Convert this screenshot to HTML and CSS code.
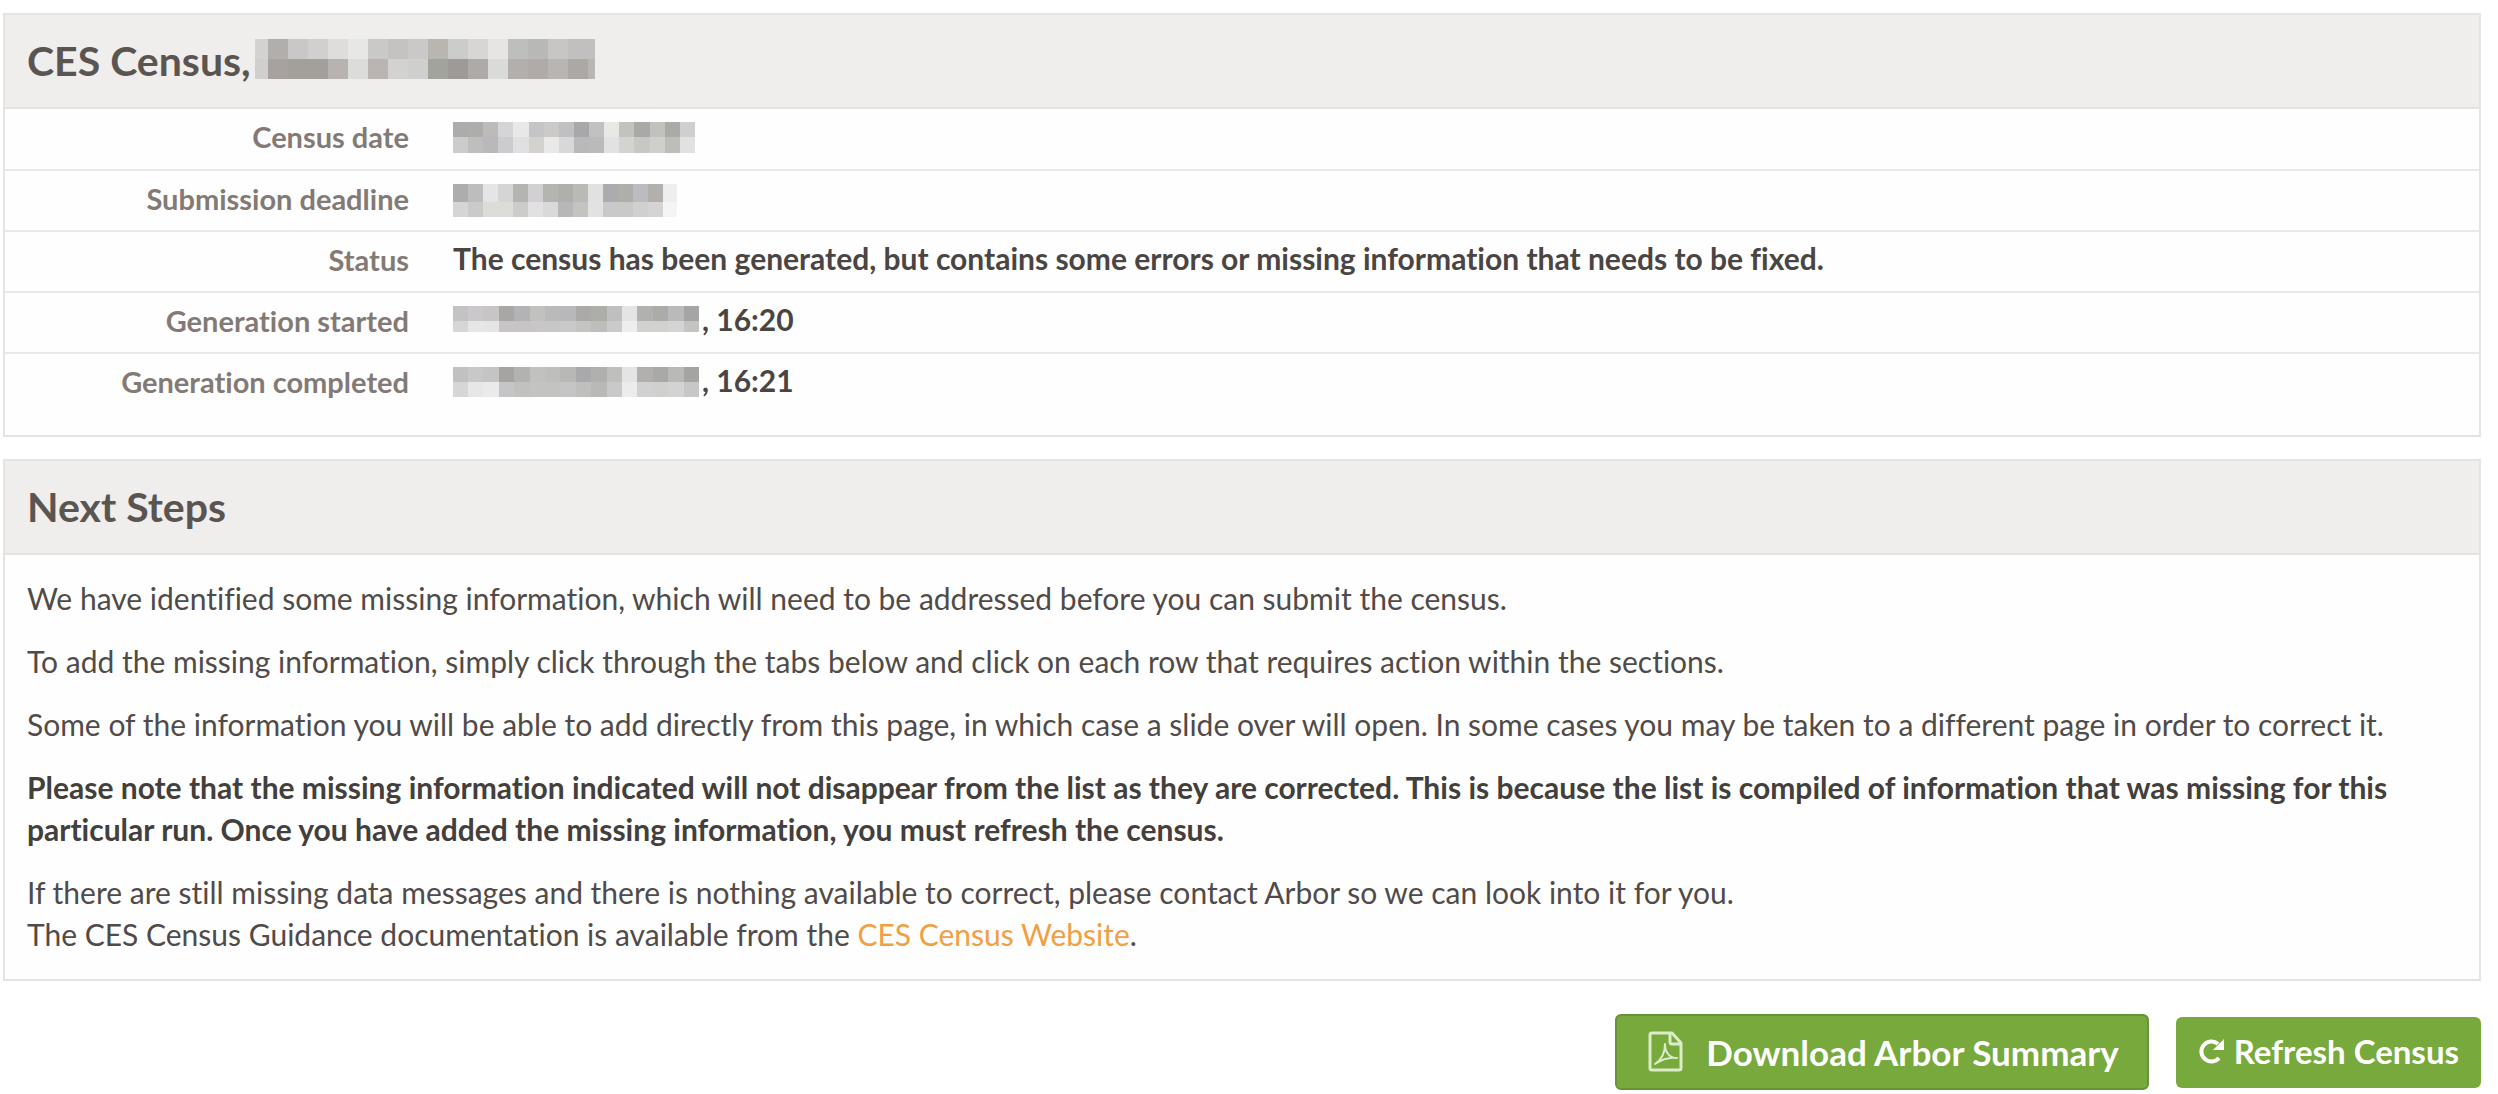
FILE: index.html
```
<!DOCTYPE html>
<html lang="en">
<head>
<meta charset="utf-8">
<title>CES Census</title>
<link rel="stylesheet" href="styles.css">
</head>
<body>
<section class="panel">
  <h2 class="panelTitle">CES Census, <svg class="mask" data-mask="title"></svg></h2>
  <table class="details">
    <tr>
      <th scope="row">Census date</th>
      <td><div class="value"><svg class="mask" data-mask="date"></svg></div></td>
    </tr>
    <tr>
      <th scope="row">Submission deadline</th>
      <td><div class="value"><svg class="mask" data-mask="deadline"></svg></div></td>
    </tr>
    <tr>
      <th scope="row">Status</th>
      <td><div class="value">The census has been generated, but contains some errors or missing information that needs to be fixed.</div></td>
    </tr>
    <tr>
      <th scope="row">Generation started</th>
      <td><div class="value"><svg class="mask" data-mask="started"></svg>, 16:20</div></td>
    </tr>
    <tr>
      <th scope="row">Generation completed</th>
      <td><div class="value"><svg class="mask" data-mask="completed"></svg>, 16:21</div></td>
    </tr>
  </table>
</section>

<section class="panel">
  <h2 class="panelTitle">Next Steps</h2>
  <div class="panelBody">
    <p>We have identified some missing information, which will need to be addressed before you can submit the census.</p>
    <p>To add the missing information, simply click through the tabs below and click on each row that requires action within the sections.</p>
    <p>Some of the information you will be able to add directly from this page, in which case a slide over will open. In some cases you may be taken to a different page in order to correct it.</p>
    <p><strong>Please note that the missing information indicated will not disappear from the list as they are corrected. This is because the list is compiled of information that was missing for this particular run. Once you have added the missing information, you must refresh the census.</strong></p>
    <p>If there are still missing data messages and there is nothing available to correct, please contact Arbor so we can look into it for you.<br>
    The CES Census Guidance documentation is available from the <a href="#">CES Census Website</a>.</p>
  </div>
</section>

<div class="actions">
  <button type="button" class="button buttonLarge">
    <svg class="pdfIcon" viewBox="0 0 35 41" aria-hidden="true">
      <path d="M4 2H24L33 12V37Q33 39 31 39H4Q2 39 2 37V4Q2 2 4 2Z"/>
      <path d="M22 2V11Q22 13 24 13H33"/>
      <path class="curve" d="M7 33C13 29 17 22 17 13C17 21 21 27 29 27C21 26 13 29 7 33Z"/>
    </svg>
    Download Arbor Summary
  </button>
  <button type="button" class="button">
    <svg class="refreshIcon" viewBox="0 0 27 26" aria-hidden="true">
      <path class="arc" d="M21 20A10 10 0 1 1 20 6"/>
      <path class="head" d="M26 1V12H15Z"/>
    </svg>
    Refresh Census
  </button>
</div>

<script>
  //Redacted dates: cell width, row heights, total width, then the greys of each row
  var masks = {
    title: {
      first: 13, cell: 20, rows: [20, 20], width: 340,
      top: "d3d2d1 b2aeac c9c8c7 d1d0cf dedddc e7e7e6 cac9c7 c4c3c1 cac9c7 b9b5b1 cccccb d7d6d5 e6e5e4 bebebd b8b8b7 c7c6c5 c1c0bf c1c0bf",
      bottom: "cfcfce a7a29f a39f9b a39f9b b8b3b0 dcdcdb bab5b2 d2d2d1 cfcfce a3a39e 9e9a98 aeaaa8 dadad9 b3afac b0aba8 b9b5b3 aca8a4 b9b5b3"
    },
    date: {
      first: 15, cell: 15, rows: [15, 16], width: 242,
      top: "acacaa adadab bcbbb9 d5d4d6 e8e8e8 c5c4c6 cbcac8 c1bfc1 a8a7a9 c1c0c2 e8e8e5 c2c2be a9a9a7 c1c2be aaaaa8 cfcfcf",
      bottom: "cccccd bfbebc b9b8ba cccbcd e1dfe1 d3d2ce e9e9e9 d8d8d8 b9b8ba bbbab8 e2e2e2 d3d3d0 c7c7c4 cfcfcc bdbdba e1e1e1"
    },
    deadline: {
      first: 15, cell: 15, rows: [18, 15], width: 224,
      top: "aeacae bdbcbe e5e5e5 d5d5d5 b4b4b1 d2d0d2 b4b4b1 afafac b9b9b6 e1e1e1 acabad aeaeab bcbbbd b2afad eeeeee",
      bottom: "d5d5d3 cacaca dcdcd9 dcdcd9 cccccb e1e1e1 dad9da b8b6b8 c3c3c0 e2e2e2 c9c9c9 c9c9c9 d0d0ce d4d4d4 f5f5f5"
    },
    started: {
      first: 15, cell: 15, rows: [15, 11], width: 246,
      top: "c3c3c4 cac8ca c7c5c6 a8a7a5 b3b2b4 c1c1be bababa b8b7b9 abaaa8 adadaa bfbfbf e5e4e5 b1b1af ababa8 bababa a6a5a6",
      bottom: "d6d6d6 e6e6e6 e5e5e5 c7c5c7 c6c5c4 c8c6c6 c8c7c8 cac9ca c4c4c2 bdbdba cacaca eeeeee d1d1d0 d1d1cf d4d4d5 c4c4c1"
    },
    completed: {
      first: 15, cell: 15, rows: [15, 15], width: 246,
      top: "c1c1c2 c9c8c9 c5c4c5 a5a4a3 b2b2b0 c1c1bf bebebc b8b8b6 a9a8aa b0b0ae bfbfbd e4e4e4 b1b0af a9a9a7 b9b9b8 a4a4a2",
      bottom: "d6d6d6 e7e7e7 eaeaea c5c4c6 c1c1bf c3c3c1 c3c3c1 c5c5c5 bfbfbd b9b9b7 c9c9ca ececec d1d1d2 d0d0ce d3d3d4 c7c6c8"
    }
  };

  function drawMask(svg, mask) {
    var height = mask.rows[0] + mask.rows[1];
    var rects = "";
    [mask.top, mask.bottom].forEach(function(row, i) {
      var colors = row.split(" ");
      //The first and last cells of a row can be cut short
      var cell = (mask.width - mask.first) / (colors.length - 1);
      if (mask.width - mask.first < mask.cell * (colors.length - 1)) {
        cell = mask.cell;
      }
      colors.forEach(function(color, n) {
        var x = n == 0 ? 0 : Math.round(mask.first + (n - 1) * cell);
        var next = Math.min(mask.width, Math.round(mask.first + n * cell));
        rects += '<rect x="' + x + '" y="' + (i == 0 ? 0 : mask.rows[0]) + '" width="' + (next - x) + '" height="' + mask.rows[i] + '" fill="#' + color + '"/>';
      });
    });
    svg.setAttribute("width", mask.width);
    svg.setAttribute("height", height);
    svg.innerHTML = rects;
  }

  document.querySelectorAll(".mask").forEach(function(svg) {
    drawMask(svg, masks[svg.dataset.mask]);
  });
</script>
</body>
</html>
```
FILE: styles.css
```
* {
  box-sizing: border-box;
}
body {
  margin: 0;
  padding: 13px 17px 5px 3px;
  background-color: #fff;
  color: #504b49;
  font-family: Lato, "Open Sans", sans-serif;
  font-size: 30px;
  font-variant-ligatures: none;
  line-height: 42px;
}
.panel {
  margin-bottom: 22px;
  border: 2px solid #e5e3e1;
  background-color: #fefefe;
}
.panelTitle {
  display: flex;
  align-items: center;
  gap: 4px;
  margin: 0;
  padding: 21px 22px;
  border-bottom: 2px solid #e5e3e1;
  background-color: #efeeec;
  color: #5b5552;
  font-size: 41px;
  line-height: 50px;
}
.panelTitle .mask {
  margin-bottom: 4px;
}
.details {
  width: 100%;
  border-collapse: collapse;
}
.details th,
.details td {
  height: 61px;
  padding: 0;
  border-bottom: 2px solid #e9e8e7;
  vertical-align: top;
  font-weight: bold;
  line-height: 36px;
}
.details th {
  width: 426px;
  padding-top: 10px;
  padding-right: 22px;
  color: #837a75;
  font-size: 29px;
  text-align: right;
}
.details td {
  padding-top: 8px;
  padding-left: 22px;
  color: #4a4543;
}
.details tr:last-child th,
.details tr:last-child td {
  height: 82px;
  border-bottom: none;
}
.value {
  display: flex;
  align-items: flex-start;
  gap: 3px;
}
.value .mask {
  margin-top: 5px;
}
.panelBody {
  padding: 22px 22px 24px;
}
.panelBody p {
  margin: 0 0 21px;
}
.panelBody p:last-child {
  margin-bottom: 0;
}
.panelBody strong {
  color: #433f3d;
}
.panelBody a {
  color: #f0a043;
  text-decoration: none;
}
.actions {
  display: flex;
  justify-content: flex-end;
  align-items: center;
  gap: 27px;
  margin-top: 33px;
}
.button {
  display: flex;
  align-items: center;
  gap: 9px;
  padding: 14px 22px 17px;
  border: none;
  border-radius: 6px;
  background-color: #78a93c;
  color: #fff;
  font-family: inherit;
  font-size: 33px;
  font-weight: bold;
  line-height: 40px;
}
.buttonLarge {
  gap: 23px;
  padding: 15px 28px 16px 31px;
  border: 2px solid #67933a;
  font-size: 35px;
}
.pdfIcon {
  width: 35px;
  height: 41px;
  fill: none;
  stroke: #dcebc8;
  stroke-width: 3;
  stroke-linejoin: round;
}
.pdfIcon .curve {
  stroke-width: 2;
}
.refreshIcon {
  width: 27px;
  height: 26px;
}
.arc {
  fill: none;
  stroke: #fff;
  stroke-width: 4;
}
.head {
  fill: #fff;
}
```
